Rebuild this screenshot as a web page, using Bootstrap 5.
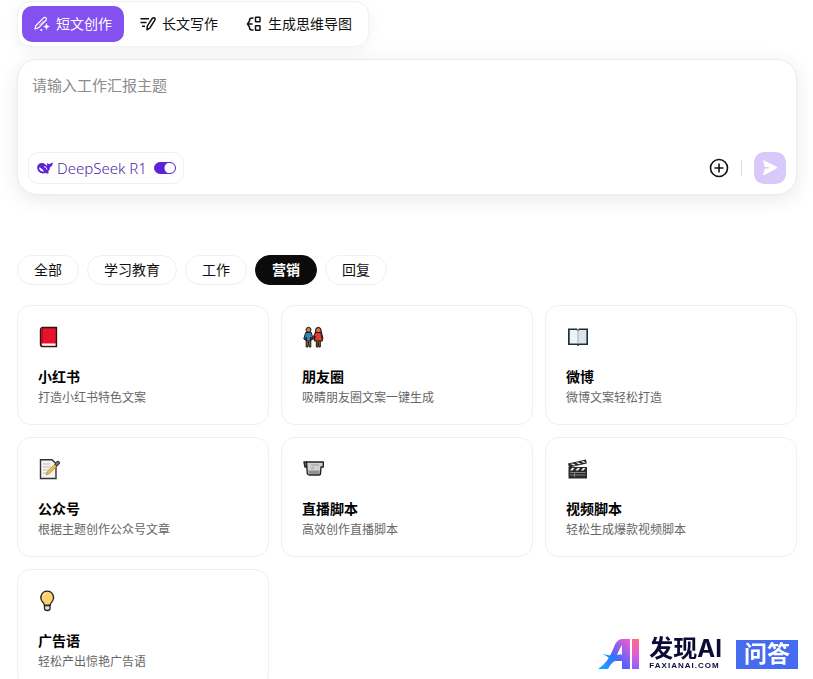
<!DOCTYPE html>
<html lang="zh-CN">
<head>
<meta charset="utf-8">
<meta name="viewport" content="width=device-width, initial-scale=1">
<title>AI 写作</title>
<link href="https://cdn.jsdelivr.net/npm/bootstrap@5.3.0/dist/css/bootstrap.min.css" rel="stylesheet">
<style>
  body { font-family: "Noto Sans", "Noto Sans CJK SC", sans-serif; font-size: 14px; color: #111; background: #fff; }
  .scroller { height: 100vh; overflow-y: auto; scrollbar-width: none; padding: 1px 16px 16px 17px; }
  .scroller::-webkit-scrollbar { display: none; }
  button { font-family: inherit; }
  .mode-bar { padding: 4px; gap: 4px; border: 1px solid #f1f1f3; border-radius: 14px; background: #fff; box-shadow: 0 4px 16px rgba(0,0,0,.05); }
  .mode-bar .btn { height: 36px; padding: 0 12px; gap: 6px; font-size: 14px; line-height: 20px; border: 0; border-radius: 10px; color: #111; }
  .mode-bar .btn.active { background: #8450ef; color: #fff; }
  .prompt-box { margin-top: 12px; padding: 14px 10px 10px; border: 1px solid #ececee; border-radius: 20px; background: #fff; box-shadow: 0 4px 20px rgba(0,0,0,.09); }
  .prompt-box textarea { height: 78px; padding: 0 4px; border: 0; resize: none; font-size: 15px; line-height: 22px; background: transparent; }
  .prompt-box textarea::placeholder { color: #8b8b8b; opacity: 1; }
  .prompt-box textarea:focus { box-shadow: none; }
  .model-pill { height: 32px; padding: 0 7px 0 8px; gap: 4px; border: 1px solid #f1f1f3; border-radius: 10px; color: #4c1fa8; font-size: 15px; }
  .model-pill label { line-height: 22px; font-weight: 300; }
  .model-pill .toggle { width: 22px; height: 12px; margin: 0 0 0 3px; appearance: none; border: 1px solid #5b22d6; border-radius: 6px; background: radial-gradient(circle at 15px 5px, #fff 5px, #5b22d6 6px); }
  .plus-btn { width: 20px; height: 20px; }
  .rule { width: 1px; height: 16px; margin: 0 12px; background: #dcdcdc; }
  .send-btn { width: 32px; height: 32px; border: 0; border-radius: 10px; background: #d9c9fb; }
  .filters { margin-top: 60px; gap: 8px; }
  .filters .btn { height: 30px; padding: 0 16px; font-size: 14px; line-height: 20px; border: 1px solid #f0f0f0; border-radius: 15px; color: #111; background: #fff; }
  .filters .btn.active { background: #0b0b0b; border-color: #0b0b0b; color: #fff; font-weight: 700; }
  .tiles { display: grid; grid-template-columns: repeat(3, 1fr); gap: 12px; margin-top: 20px; }
  .tile { padding: 20px 20px 16px; border: 1px solid #f0f0f0; border-radius: 14px; color: #111; }
  .tile svg { width: 22px; height: 22px; margin-bottom: 18px; }
  .tile h2 { margin: 0; font-size: 14px; line-height: 22px; font-weight: 700; color: #000; }
  .tile p { margin: 0; font-size: 12px; line-height: 20px; color: #666; }
  .brand-mark { position: fixed; right: 15px; bottom: 10px; gap: 9px; }
  .brand-text { gap: 2px; }
  .brand-name { font-family: Inter, "Noto Sans CJK SC", sans-serif; font-size: 24px; line-height: 24px; font-weight: 700; color: #0b0b38; }
  .brand-url { font-family: "Liberation Sans", sans-serif; font-size: 8px; line-height: 6px; font-weight: 700; letter-spacing: 1px; color: #0b0b38; }
  .brand-qa { margin-left: 5px; width: 62px; height: 29px; background: #456cf0; color: #fff; font-size: 23px; line-height: 26px; font-weight: 700; }
</style>
<script src="https://cdn.jsdelivr.net/npm/bootstrap@5.3.0/dist/js/bootstrap.bundle.min.js" defer></script>
</head>
<body>
<main class="scroller">
  <nav class="mode-bar d-inline-flex align-items-center align-top" aria-label="写作模式">
    <button type="button" class="btn active d-flex align-items-center">
      <svg width="16" height="16" viewBox="0 0 16 16" fill="none" stroke="currentColor" stroke-width="1.2" stroke-linejoin="round" stroke-linecap="round"><path d="M1 13 2 9.500 9.800 1.700Q11 .8 12 1.800T12.200 4L4.500 11.800Z"/><path d="M5.500 9 9.500 5" stroke-width=".7"/><path d="M12.500 7.600 13.300 9.800 15.500 10.600 13.300 11.400 12.500 13.600 11.700 11.400 9.500 10.600 11.700 9.800Z" fill="currentColor" stroke-width=".4"/><circle cx="7.200" cy="14" r=".7" fill="currentColor" stroke-width=".6"/></svg>
      短文创作</button>
    <button type="button" class="btn d-flex align-items-center">
      <svg width="16" height="16" viewBox="0 0 16 16" fill="none" stroke="currentColor" stroke-width="1.5" stroke-linejoin="round"><path d="M.5 2.700H9M.5 6.500H6.500M2 10.300H5"/><path d="M7 13.800 7.300 10.200 12.200 2.500Q13.200 1.300 14.400 2T14.800 4.200L10 11.900Z"/></svg>
      长文写作</button>
    <button type="button" class="btn d-flex align-items-center">
      <svg width="16" height="16" viewBox="0 0 16 16" fill="none" stroke="currentColor" stroke-width="1.500"><path d="M7.500 2H6Q3.500 2 3.500 4.500V5L1.500 8 3.500 11V11.500Q3.500 14 6 14H7.500M1.500 8H6.500"/><rect x="9.500" y="1.300" width="4.500" height="4.500" rx=".5"/><rect x="9.500" y="9.800" width="4.500" height="4.500" rx=".5"/></svg>
      生成思维导图</button>
  </nav>

  <form class="prompt-box">
    <textarea class="form-control" aria-label="主题" placeholder="请输入工作汇报主题"></textarea>
    <div class="d-flex align-items-center">
      <div class="model-pill d-flex align-items-center">
        <svg width="16" height="14" viewBox="0 0 16 14"><path fill="#5b22d6" d="M.2 6.800C.2 4 2.600 1.900 5.300 2.100 7.400 2.200 8.400 3.600 10 5 10.400 3.900 9.900 2.700 10.500 1.700 11.100 3 12 3.200 12.800 2.900 13.900 2.500 14.500 1.700 15.800 1.800 15.800 4 14.900 5.700 13 6.200 12.800 8.200 12.100 9.700 10.900 10.900L12.300 12C10.800 12.600 9.500 12.400 8.400 12.100 4.200 13.400.3 10.900.2 6.800Z"/><path fill="#fff" d="M2 6.500C4 6.500 5.600 8.300 7.200 10.400 4.500 11 2.200 9.400 2 6.500Z"/><path d="M7 5.500Q9.500 6 10 8.500" fill="none" stroke="#fff" stroke-width="1"/></svg>
        <label for="r1">DeepSeek R1</label>
        <input id="r1" class="toggle" type="checkbox" role="switch" checked>
      </div>
      <button type="button" class="btn p-0 border-0 plus-btn d-flex ms-auto" aria-label="添加">
        <svg width="20" height="20" viewBox="0 0 20 20" fill="none" stroke="#111" stroke-width="1.6"><circle cx="10" cy="10" r="8.500"/><path d="M10 5.500V14.500M5.500 10H14.500"/></svg>
      </button>
      <span class="rule"></span>
      <button type="submit" class="btn send-btn p-0 d-flex align-items-center justify-content-center" aria-label="发送">
        <svg width="16" height="18" viewBox="0 0 16 18"><path fill="#fff" d="M1.800 1.300 15 8.100Q15.800 8.600 15 9.200L1.800 16.200Q1 16.500 1.200 15.600L2.700 9.600H6.800V8H2.700L1.200 1.900Q1 1 1.800 1.300Z"/></svg>
      </button>
    </div>
  </form>

  <div class="filters d-flex flex-wrap">
    <button type="button" class="btn">全部</button>
    <button type="button" class="btn">学习教育</button>
    <button type="button" class="btn">工作</button>
    <button type="button" class="btn active">营销</button>
    <button type="button" class="btn">回复</button>
  </div>

  <section class="tiles">
    <a href="#" class="tile d-block text-decoration-none">
      <svg viewBox="0 0 22 22" class="d-block"><path d="M5 1.500H18.500V20.500H4.500Q2.500 20.500 2.500 18V4Q2.500 1.500 5 1.500Z" fill="#e9122b" stroke="#2b1418" stroke-width="1.400"/><path d="M4 17.500H17.500V19.700H4.500Q3.400 19 4 17.500Z" fill="#fff"/><path d="M4.500 2.500V16.500" stroke="#a90e21"/></svg>
      <h2>小红书</h2><p>打造小红书特色文案</p>
    </a>
    <a href="#" class="tile d-block text-decoration-none">
      <svg viewBox="0 0 22 22" class="d-block" stroke="#1c1715" stroke-width="1"><path d="M4.200 13H8.800V21H7.200L6.500 16 5.800 21H4.200Z" fill="#a66a32"/><path d="M3.700 6.500H9.300L11 13 9.500 14 8.700 11V15H4.300V11L3.500 14 1.800 13Z" fill="#3187bd"/><circle cx="6.500" cy="3.800" r="2.500" fill="#c18440"/><path d="M13.500 5Q13.300 1.300 16.300 1.300T19.200 5L21 13H12.300Z" fill="#c64b2e"/><path d="M14.300 13H18.300V21H16.800L16.300 16 15.800 21H14.300Z" fill="#a66a32"/><path d="M13.800 6.500H18.800L20.500 15H12.300L13.300 10 11 13.500 10 12.500Z" fill="#e43a32"/><circle cx="16.300" cy="4.300" r="1.700" fill="#c98544" stroke="none"/></svg>
      <h2>朋友圈</h2><p>吸睛朋友圈文案一键生成</p>
    </a>
    <a href="#" class="tile d-block text-decoration-none">
      <svg viewBox="0 0 22 22" class="d-block"><path d="M2 2.500H22V19H13.500L12 20 10.500 19H2Z" fill="#19313d"/><path d="M3.700 4H10Q11.500 4 12 5V17.500H3.700Z" fill="#eef2f5"/><path d="M12 5Q12.500 4 14 4H20.400V17.500H12Z" fill="#dce4e9"/><path d="M12 5V17.500" stroke="#92a1ab" stroke-width=".8"/><path d="M10.700 2.300 12 4 13.300 2.300Z" fill="#fff"/></svg>
      <h2>微博</h2><p>微博文案轻松打造</p>
    </a>
    <a href="#" class="tile d-block text-decoration-none">
      <svg viewBox="0 0 22 22" class="d-block"><path d="M2.500 1.700H14L18 5.500V20.500H2.500Z" fill="#f6f4ef" stroke="#333" stroke-width="1.400"/><path d="M5 6H12M5 9H13M5 12H11M5 15H9" stroke="#b9b9b9"/><path d="M8 17 9.500 13.500 17.500 5.500 19.500 7.500 11.500 15.500Z" fill="#e8c04e" stroke="#9b7b2d" stroke-width=".6"/><path d="M17 6 19 3.700Q20.500 3 21.200 4.200T20.700 6L18.800 8Z" fill="#a87e76" stroke="#333" stroke-width="1.100"/></svg>
      <h2>公众号</h2><p>根据主题创作公众号文章</p>
    </a>
    <a href="#" class="tile d-block text-decoration-none">
      <svg viewBox="0 0 22 22" class="d-block" stroke="#222" stroke-width="1.400" stroke-linejoin="round"><path d="M2 4H5V9H3Z" fill="#777"/><path d="M4.500 4H21.300V9H19L18.500 15.500Q18.500 17 16.500 17H7.500Q5.500 17 5.300 15.500Z" fill="#d0d0d0"/><path d="M6.500 12.500H17.500V16H6.500Z" fill="#929292" stroke="none"/><path d="M9 7H17M9 10H12" stroke="#999" stroke-width="1"/></svg>
      <h2>直播脚本</h2><p>高效创作直播脚本</p>
    </a>
    <a href="#" class="tile d-block text-decoration-none">
      <svg viewBox="0 0 22 22" class="d-block"><path d="M2.500 9H21V20.500H2.500Z" fill="#292929"/><path d="M2 5.500 20 1.500 20.800 5.500 3 9.500Z" fill="#292929"/><path d="M4.500 6 8 7.400 10 7 6.500 5.500ZM9.700 4.800 13.200 6.200 15.200 5.800 11.700 4.300ZM15 3.600 18 5 19.700 4.500 17 3.100ZM6 10 4 12.500H6.500L8.500 10ZM11.500 10 9.500 12.500H12L14 10ZM17 10 15 12.500H17.500L19.500 10Z" fill="#f3f3f3"/><path d="M4 14.500H19.500M4 17H19.500M8.500 14.500V19" stroke="#999" stroke-width=".8"/></svg>
      <h2>视频脚本</h2><p>轻松生成爆款视频脚本</p>
    </a>
    <a href="#" class="tile d-block text-decoration-none">
      <svg viewBox="0 0 22 22" class="d-block"><path d="M6.500 15.500Q6.500 14 4.500 11.800C.8 7.500 4 1.200 9.200 1.200S17.600 7.500 13.900 11.800Q12 14 12 15.500Z" fill="#ffd270" stroke="#222" stroke-width="1.300"/><path d="M6.500 15.500H12V18.500Q12 20.500 9.300 20.500T6.500 18.500Z" fill="#e2e5e8" stroke="#222" stroke-width="1.300"/><path d="M5 6Q5.700 3.600 8 3.200" fill="none" stroke="#fff0c4"/></svg>
      <h2>广告语</h2><p>轻松产出惊艳广告语</p>
    </a>
  </section>
</main>

<aside class="brand-mark d-flex align-items-end">
  <svg width="42" height="30" viewBox="0 0 42 30" aria-hidden="true">
    <defs><linearGradient id="ga" x1="0" y1="1" x2="1" y2="0"><stop offset="0" stop-color="#05b5ff"/><stop offset=".45" stop-color="#5162ff"/><stop offset="1" stop-color="#f35ccf"/></linearGradient><linearGradient id="gi" x1="0" y1="0" x2="0" y2="1"><stop offset="0" stop-color="#ff6a84"/><stop offset=".5" stop-color="#e65bd7"/><stop offset="1" stop-color="#8a60ff"/></linearGradient></defs>
    <path fill="url(#ga)" d="M0 30Q10 24 16 8 19 0 24 0H32V30H24V22H17Q13 24 10 30ZM19 16H24V6Q22 9 19 16Z"/>
    <path fill="#1688f5" d="M5 15 14 17 24 15 18 19Q12 22 10 18Z"/>
    <path fill="url(#gi)" d="M34 0H41V30H34Z"/>
  </svg>
  <div class="brand-text d-flex flex-column">
    <span class="brand-name">发现AI</span>
    <span class="brand-url">FAXIANAI.COM</span>
  </div>
  <span class="brand-qa text-center">问答</span>
</aside>
</body>
</html>
